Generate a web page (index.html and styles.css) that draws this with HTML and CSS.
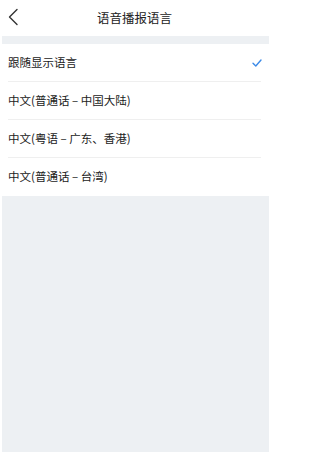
FILE: index.html
```html
<!DOCTYPE html>
<html lang="zh">
<head>
<meta charset="utf-8">
<link rel="stylesheet" href="styles.css">
</head>
<body>
<div class="page">
  <header class="header">
    <span class="back">
      <svg width="12" height="18" viewBox="0 0 12 18"><path d="M10 1.5 L2.5 9 L10 16.5" fill="none" stroke="#333" stroke-width="1.4" stroke-linecap="round" stroke-linejoin="round"/></svg>
    </span>
    <h1 class="title">语音播报语言</h1>
  </header>
  <div class="gap"></div>
  <ul class="list">
    <li class="item"><span>跟随显示语言</span>
      <svg class="check" width="10" height="8" viewBox="0 0 10 8"><path d="M1 4.2 L3.8 7 L9 1" fill="none" stroke="#3d8be8" stroke-width="1.4" stroke-linecap="round" stroke-linejoin="round"/></svg>
    </li>
    <li class="item"><span>中文(普通话 – 中国大陆)</span></li>
    <li class="item"><span>中文(粤语 – 广东、香港)</span></li>
    <li class="item last"><span>中文(普通话 – 台湾)</span></li>
  </ul>
  <div class="rest"></div>
</div>
</body>
</html>
```

FILE: styles.css
```css
html, body {
  margin: 0;
  padding: 0;
  background: #fff;
}
body {
  font-family: "Noto Sans CJK SC", "Noto Sans", sans-serif;
  color: #222;
}
.page {
  display: flex;
  flex-direction: column;
  width: 267px;
  height: 452px;
  padding: 0 1px 0 2px;
}
.header {
  position: relative;
  height: 36px;
  display: flex;
  align-items: center;
  justify-content: center;
  background: #fff;
}
.back {
  position: absolute;
  left: 5px;
  top: 8px;
  display: flex;
}
.title {
  margin: 0 0 0 -2px;
  font-size: 12.5px;
  font-weight: normal;
  color: #222;
  line-height: 1;
}
.gap {
  height: 8px;
  background: #edf0f3;
}
.list {
  list-style: none;
  margin: 0;
  padding: 0 8px 0 6px;
  background: #fff;
}
.item {
  height: 37px;
  display: flex;
  align-items: center;
  justify-content: space-between;
  font-size: 11.5px;
  line-height: 1;
  border-bottom: 1px solid #efefef;
}
.item.last {
  border-bottom: none;
  height: 38px;
}
.check {
  margin-right: -1px;
}
.rest {
  flex: 1;
  background: #edf0f3;
}
```
